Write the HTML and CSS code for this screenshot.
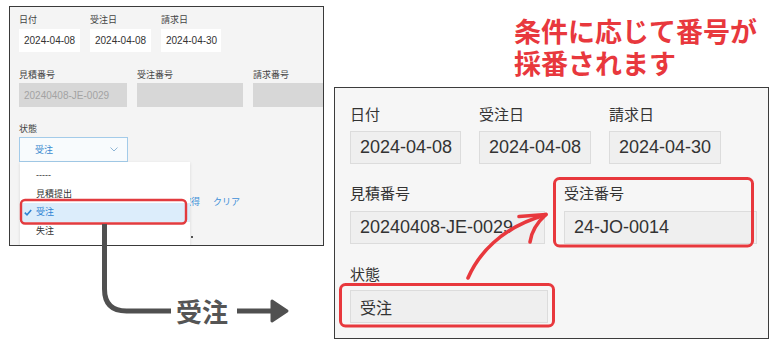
FILE: index.html
```html
<!DOCTYPE html>
<html lang="ja">
<head>
<meta charset="utf-8">
<title>採番</title>
<link rel="stylesheet" href="styles.css">
</head>
<body>
<div class="canvas">
  <div class="shot shot-left">
    <div class="l-row">
      <div class="l-field"><div class="l-label">日付</div><div class="l-input w61">2024-04-08</div></div>
      <div class="l-field"><div class="l-label">受注日</div><div class="l-input w61">2024-04-08</div></div>
      <div class="l-field"><div class="l-label">請求日</div><div class="l-input w60">2024-04-30</div></div>
    </div>
    <div class="l-row row2">
      <div class="l-field"><div class="l-label">見積番号</div><div class="l-box w108">20240408-JE-0029</div></div>
      <div class="l-field"><div class="l-label">受注番号</div><div class="l-box w106"></div></div>
      <div class="l-field"><div class="l-label">請求番号</div><div class="l-box w90"></div></div>
    </div>
    <div class="l-row row3">
      <div class="l-field">
        <div class="l-label">状態</div>
        <div class="l-select">
          <span>受注</span>
          <svg class="chev" width="8" height="5" viewBox="0 0 8 5"><path d="M0.5 0.5 L4 4 L7.5 0.5" fill="none" stroke="#8fb6d6" stroke-width="1"/></svg>
        </div>
      </div>
    </div>
    <div class="l-links"><span>取得</span><span>クリア</span></div>
    <div class="l-dot"></div>
    <div class="l-menu">
      <div class="l-item">-----</div>
      <div class="l-item">見積提出</div>
      <div class="l-item selected">
        <svg class="check" width="8" height="7" viewBox="0 0 8 7"><path d="M0.8 3.6 L3 5.8 L7.2 1" fill="none" stroke="#2f84d4" stroke-width="1.6"/></svg>
        受注
      </div>
      <div class="l-item">失注</div>
    </div>
  </div>

  <div class="shot shot-right">
    <div class="r-row">
      <div class="r-field"><div class="r-label">日付</div><div class="r-input w111">2024-04-08</div></div>
      <div class="r-field"><div class="r-label">受注日</div><div class="r-input w112">2024-04-08</div></div>
      <div class="r-field"><div class="r-label">請求日</div><div class="r-input w112">2024-04-30</div></div>
    </div>
    <div class="r-row r-row2">
      <div class="r-field"><div class="r-label">見積番号</div><div class="r-input w195">20240408-JE-0029</div></div>
      <div class="r-field"><div class="r-label">受注番号</div><div class="r-input w193">24-JO-0014</div></div>
    </div>
    <div class="r-row r-row3">
      <div class="r-field"><div class="r-label">状態</div><div class="r-input w198 cjk">受注</div></div>
    </div>
  </div>

  <div class="headline">
    <div class="headline-line">条件に応じて番号が</div>
    <div class="headline-line">採番されます</div>
  </div>

  <svg class="overlay" width="780" height="350" viewBox="0 0 780 350">
    <rect x="21" y="200" width="165" height="23.5" rx="4" fill="none" stroke="#e23b3f" stroke-width="2.4"/>
    <path d="M104.5 224 V289 Q104.5 311 126.5 311 H171" fill="none" stroke="#505050" stroke-width="5"/>
    <path d="M237 311 H274" fill="none" stroke="#505050" stroke-width="5"/>
    <path d="M272 301 L287 311 L272 321 Z" fill="#505050" stroke="#505050" stroke-width="3" stroke-linejoin="round"/>
    <rect x="554.5" y="178.5" width="198" height="67.5" rx="5" fill="none" stroke="#e8383d" stroke-width="3"/>
    <rect x="340.5" y="284.5" width="213" height="41.5" rx="5" fill="none" stroke="#e8383d" stroke-width="3"/>
    <path d="M468 278 C478 255 500 228 545 215" fill="none" stroke="#e8383d" stroke-width="3.6" stroke-linecap="round"/>
    <path d="M519 216.5 L546 214.5" fill="none" stroke="#e8383d" stroke-width="3.6" stroke-linecap="round"/>
    <path d="M546 214.5 Q532 227 530 242" fill="none" stroke="#e8383d" stroke-width="3.6" stroke-linecap="round"/>
  </svg>

  <div class="flow-label">受注</div>
</div>
</body>
</html>
```

FILE: styles.css
```css
* { box-sizing: border-box; }

body {
  margin: 0;
  background: #ffffff;
  font-family: "Liberation Sans", "Noto Sans CJK JP", sans-serif;
}

.canvas {
  position: relative;
  width: 780px;
  height: 350px;
  overflow: hidden;
  background: #ffffff;
}

.shot {
  position: absolute;
  overflow: hidden;
}

/* ---------- left screenshot ---------- */
.shot-left {
  left: 9px;
  top: 6px;
  width: 315px;
  height: 240px;
  border: 1px solid #3a3a3a;
  background: #f4f4f4;
  padding: 7px 0 0 9px;
}

.l-row {
  display: flex;
  gap: 10px;
}

.l-row.row2 { margin-top: 17px; }
.l-row.row3 { margin-top: 16px; }

.l-field {
  display: flex;
  flex-direction: column;
}

.l-label {
  font-size: 9px;
  line-height: 12px;
  color: #444444;
  margin-bottom: 3px;
}

.row2 .l-label,
.row3 .l-label { margin-bottom: 2px; }

.l-input {
  height: 23px;
  background: #ffffff;
  font-size: 10px;
  color: #333333;
  padding-left: 5px;
  display: flex;
  align-items: center;
}

.l-box {
  height: 24px;
  background: #d7d7d7;
  font-size: 10px;
  color: #a3a3a3;
  padding-left: 5px;
  display: flex;
  align-items: center;
}

.w60 { width: 60px; }
.w61 { width: 61px; }
.w90 { width: 90px; }
.w106 { width: 106px; }
.w108 { width: 108px; }

.l-select {
  width: 109px;
  height: 25px;
  border: 1px solid #a3cbe9;
  background: #f8fbfd;
  display: flex;
  align-items: center;
  justify-content: space-between;
  padding: 0 9px 0 15px;
  font-size: 9px;
  color: #3a8ad0;
}

.chev { display: block; }

.l-links {
  position: absolute;
  left: 172px;
  top: 189px;
  display: flex;
  gap: 13px;
  font-size: 9px;
  line-height: 12px;
  color: #3d8fd8;
}

.l-dot {
  position: absolute;
  left: 181px;
  top: 229px;
  width: 1.5px;
  height: 1.5px;
  background: #555555;
}

.l-menu {
  position: absolute;
  left: 10px;
  top: 155px;
  width: 170px;
  height: 92px;
  background: #ffffff;
  padding-top: 4px;
  box-shadow: 0 1px 3px rgba(0, 0, 0, 0.12);
  z-index: 2;
}

.l-item {
  height: 18.5px;
  line-height: 18.5px;
  padding-left: 16px;
  font-size: 9px;
  color: #333333;
  position: relative;
}

.l-item.selected {
  background: #dcedfb;
  color: #2f84d4;
}

.check {
  position: absolute;
  left: 4px;
  top: 6px;
}

/* ---------- right screenshot ---------- */
.shot-right {
  left: 334px;
  top: 87px;
  width: 435px;
  height: 252px;
  border: 1px solid #3c3c3c;
  background: #f6f6f6;
  padding: 17px 0 0 15px;
}

.r-row {
  display: flex;
  gap: 18px;
}

.r-row2 { margin-top: 20px; gap: 19px; }
.r-row3 { margin-top: 21px; }

.r-field {
  display: flex;
  flex-direction: column;
}

.r-label {
  font-size: 15px;
  line-height: 20px;
  color: #333333;
  margin-bottom: 6px;
}

.r-row2 .r-label { margin-bottom: 7px; }
.r-row3 .r-label { margin-bottom: 5px; }

.r-input {
  height: 33px;
  background: #efefef;
  border: 1px solid #dcdcdc;
  font-size: 18px;
  color: #333333;
  padding-left: 9px;
  display: flex;
  align-items: center;
  white-space: nowrap;
}

.r-input.cjk { font-size: 16px; }

.w111 { width: 111px; }
.w112 { width: 112px; }
.w193 { width: 193px; }
.w195 { width: 195px; }
.w198 { width: 198px; }

/* ---------- annotations ---------- */
.headline {
  position: absolute;
  left: 514px;
  top: 15px;
  display: flex;
  flex-direction: column;
  font-family: "Noto Sans CJK JP", sans-serif;
  font-weight: 700;
  font-size: 27px;
  color: #e8383d;
  white-space: nowrap;
}

.headline-line {
  height: 32px;
  line-height: 32px;
}

.overlay {
  position: absolute;
  left: 0;
  top: 0;
  z-index: 5;
}

.flow-label {
  position: absolute;
  left: 176px;
  top: 296px;
  font-family: "Noto Sans CJK JP", sans-serif;
  font-weight: 700;
  font-size: 26px;
  line-height: 30px;
  color: #555555;
  z-index: 6;
}
```
